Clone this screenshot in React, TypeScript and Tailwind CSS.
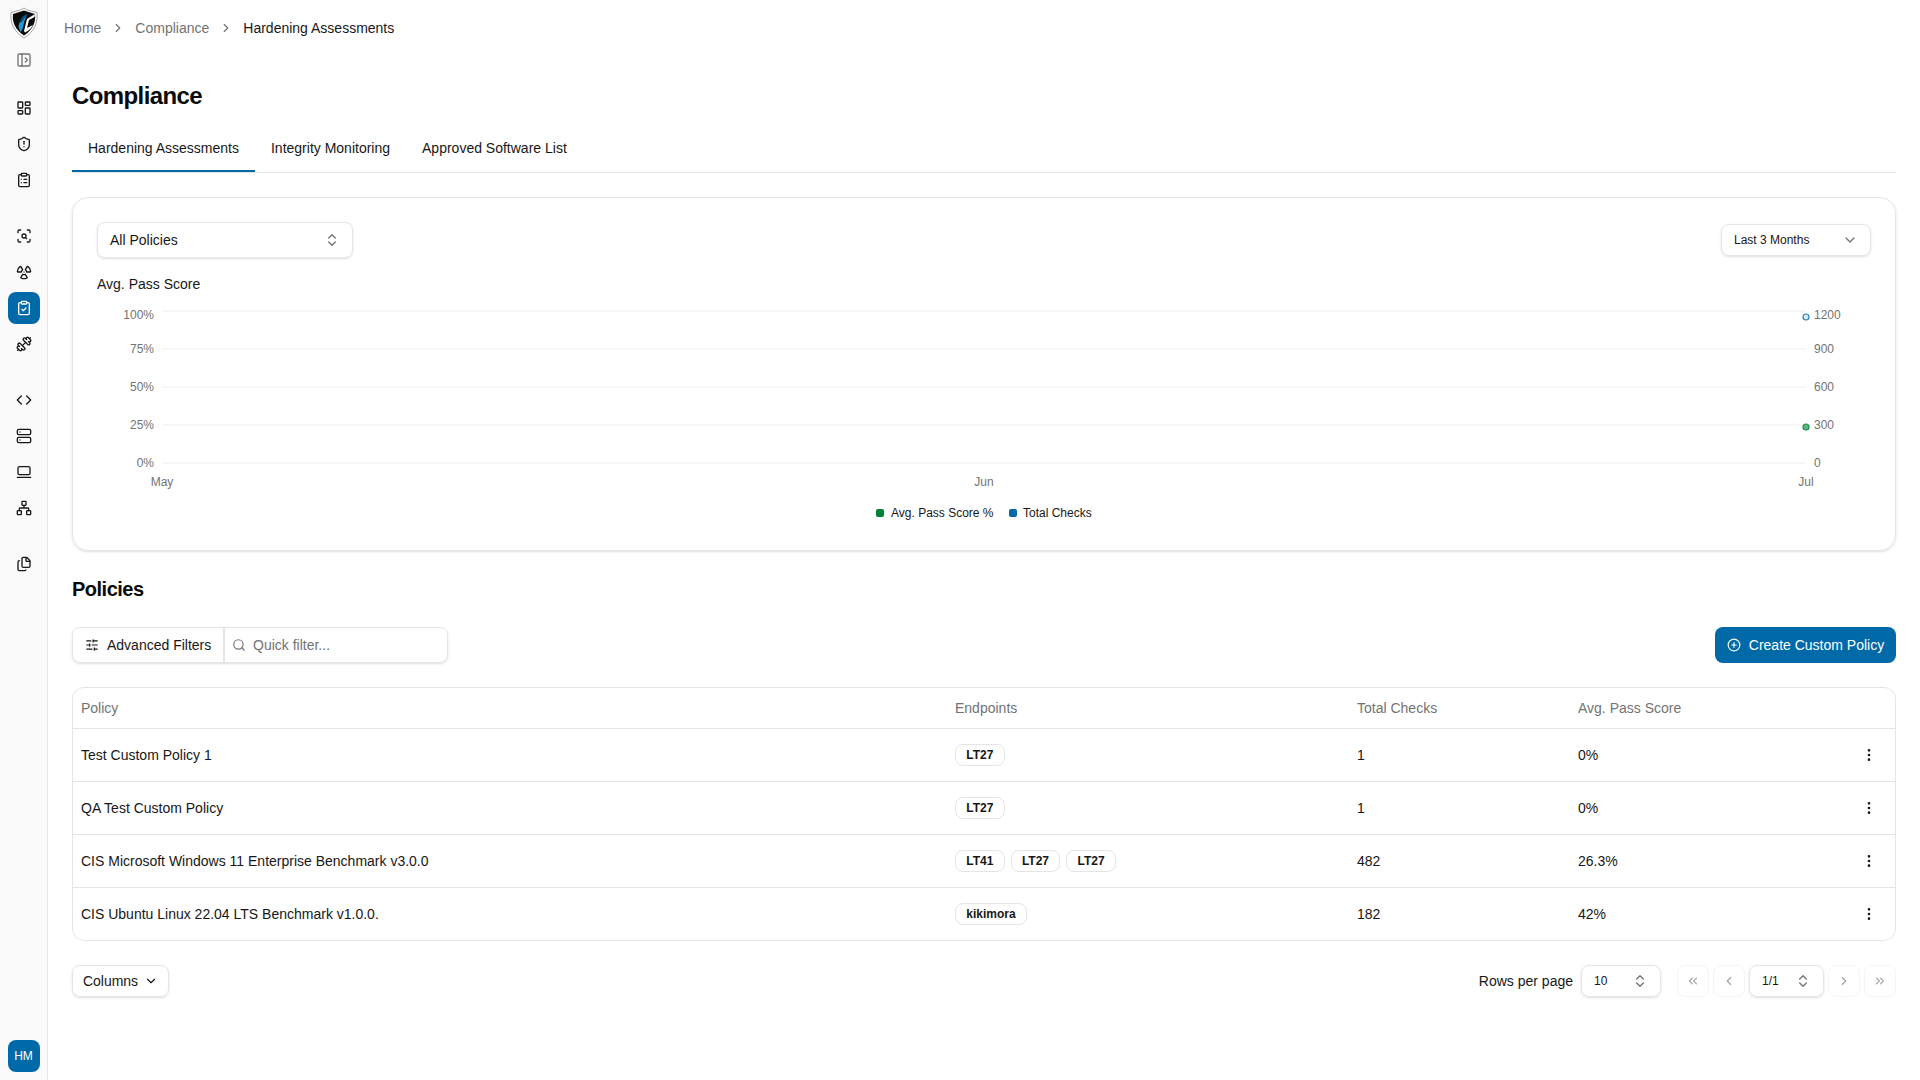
import {
  ChevronDown,
  ChevronLeft,
  ChevronRight,
  ChevronsLeft,
  ChevronsRight,
  ChevronsUpDown,
  ClipboardCheck,
  ClipboardList,
  Code,
  Dumbbell,
  EllipsisVertical,
  Files,
  LaptopMinimal,
  LayoutDashboard,
  Network,
  PanelLeftOpen,
  PlusCircle,
  Radiation,
  ScanSearch,
  Search,
  Server,
  ShieldAlert,
  SlidersHorizontal,
} from "lucide-react";

const policies = [
  { name: "Test Custom Policy 1", endpoints: ["LT27"], checks: "1", score: "0%" },
  { name: "QA Test Custom Policy", endpoints: ["LT27"], checks: "1", score: "0%" },
  { name: "CIS Microsoft Windows 11 Enterprise Benchmark v3.0.0", endpoints: ["LT41", "LT27", "LT27"], checks: "482", score: "26.3%" },
  { name: "CIS Ubuntu Linux 22.04 LTS Benchmark v1.0.0.", endpoints: ["kikimora"], checks: "182", score: "42%" },
];

const leftTicks = [
  { label: "100%", y: 15 },
  { label: "75%", y: 49 },
  { label: "50%", y: 87 },
  { label: "25%", y: 125 },
  { label: "0%", y: 163 },
];
const rightTicks = ["1200", "900", "600", "300", "0"];
const gridLines = [11, 49, 87, 125, 163];

function Logo() {
  return (
    <svg width="30" height="32" viewBox="0 0 30 32">
      <path d="M15 1 L18.5 3 L28 5.5 C29 15 26 24 15 31 C4 24 1 15 2 5.5 L11.5 3 Z" fill="#fff" stroke="#a3a3a3" strokeWidth="1" />
      <path d="M15 3.5 L26 7 C27 15 24 22.5 15 28.5 C6 22.5 3 15 4 7 Z" fill="#0a0a0a" />
      <path d="M18 7 L15.5 14 L13.5 22 L11.5 25 L9.5 20 C10 15 13 10 18 7 Z" fill="#1d9bd9" />
      <path d="M18 7 L13 10 L10.5 16 L13 15 Z" fill="#0c4a7e" />
      <path d="M18 12 L26 7 L25.5 10 L20 13 L18 21 L24 18 C22.5 21 20 23.5 16 25.5 L15 24 Z" fill="#fff" />
    </svg>
  );
}

function NavIcon({ children, active }: { children: React.ReactNode; active?: boolean }) {
  return (
    <div className={active ? "flex h-8 w-8 items-center justify-center rounded-lg bg-[#0069a8] text-white" : "flex h-8 w-8 items-center justify-center text-neutral-900"}>
      {children}
    </div>
  );
}

function Sidebar() {
  return (
    <aside className="flex h-[1080px] w-12 shrink-0 flex-col items-center border-r border-neutral-200 bg-neutral-50">
      <div className="mt-[7px] flex h-8 items-center">
        <Logo />
      </div>
      <div className="mt-[5px] flex h-8 w-8 items-center justify-center text-neutral-500">
        <PanelLeftOpen size={16} />
      </div>
      <div className="mt-[16px] flex flex-col gap-1">
        <NavIcon><LayoutDashboard size={16} /></NavIcon>
        <NavIcon><ShieldAlert size={16} /></NavIcon>
        <NavIcon><ClipboardList size={16} /></NavIcon>
      </div>
      <div className="mt-6 flex flex-col gap-1">
        <NavIcon><ScanSearch size={16} /></NavIcon>
        <NavIcon><Radiation size={16} /></NavIcon>
        <NavIcon active><ClipboardCheck size={16} /></NavIcon>
        <NavIcon><Dumbbell size={16} /></NavIcon>
      </div>
      <div className="mt-6 flex flex-col gap-1">
        <NavIcon><Code size={16} /></NavIcon>
        <NavIcon><Server size={16} /></NavIcon>
        <NavIcon><LaptopMinimal size={16} /></NavIcon>
        <NavIcon><Network size={16} /></NavIcon>
      </div>
      <div className="mt-6">
        <NavIcon><Files size={16} /></NavIcon>
      </div>
      <div className="mt-auto mb-2 flex h-8 w-8 items-center justify-center rounded-lg bg-[#0069a8] text-xs text-white">HM</div>
    </aside>
  );
}

function Chart() {
  return (
    <svg className="mt-[6px] block" width="1774" height="230" viewBox="0 0 1774 230" fontFamily="'Liberation Sans', Arial, sans-serif" fontSize="12">
      {gridLines.map((y) => (
        <line key={y} x1="65" x2="1709" y1={y} y2={y} stroke="#f7f7f7" strokeWidth="2" />
      ))}
      {leftTicks.map((t) => (
        <text key={t.label} x="57" y={t.y + 4} textAnchor="end" fill="#737373">{t.label}</text>
      ))}
      {rightTicks.map((t, i) => (
        <text key={t} x="1717" y={leftTicks[i].y + 4} fill="#737373">{t}</text>
      ))}
      <text x="65" y="186" textAnchor="middle" fill="#737373">May</text>
      <text x="887" y="186" textAnchor="middle" fill="#737373">Jun</text>
      <text x="1709" y="186" textAnchor="middle" fill="#737373">Jul</text>
      <circle cx="1709" cy="17" r="3" fill="#d6e8f3" stroke="#3484b8" strokeWidth="1.2" />
      <circle cx="1709" cy="127" r="3" fill="#5bb583" stroke="#1f8f4e" strokeWidth="1.2" />
      <rect x="779" y="209" width="8" height="8" rx="2" fill="#008236" />
      <text x="794" y="217" fill="#171717">Avg. Pass Score %</text>
      <rect x="912" y="209" width="8" height="8" rx="2" fill="#0069a8" />
      <text x="926" y="217" fill="#171717">Total Checks</text>
    </svg>
  );
}

function Chip({ label }: { label: string }) {
  return (
    <span className="inline-flex h-[22px] items-center rounded-lg border border-neutral-200 px-[10.25px] text-xs font-semibold text-neutral-900">{label}</span>
  );
}

function PolicyTable() {
  const cols = "grid grid-cols-[874px_402px_221px_1fr_48px] items-center";
  return (
    <div className="mt-6 overflow-hidden rounded-xl border border-neutral-200">
      <div className={`${cols} h-[41px] border-b border-neutral-200 text-sm text-[#737373]`}>
        <div className="px-2">Policy</div>
        <div className="px-2">Endpoints</div>
        <div className="px-2">Total Checks</div>
        <div className="px-2">Avg. Pass Score</div>
        <div />
      </div>
      {policies.map((p, i) => (
        <div key={p.name} className={`${cols} text-sm text-neutral-900 ${i < policies.length - 1 ? "h-[53px] border-b border-neutral-200" : "h-[52px]"}`}>
          <div className="px-2">{p.name}</div>
          <div className="flex gap-1.5 px-2">
            {p.endpoints.map((e, j) => (
              <Chip key={j} label={e} />
            ))}
          </div>
          <div className="px-2">{p.checks}</div>
          <div className="px-2">{p.score}</div>
          <div className="flex justify-center pr-1">
            <EllipsisVertical size={16} />
          </div>
        </div>
      ))}
    </div>
  );
}

function PageBtn({ children }: { children: React.ReactNode }) {
  return (
    <div className="flex h-8 w-8 items-center justify-center rounded-lg border border-neutral-100 text-[#a3a3a3]">{children}</div>
  );
}

function Pagination() {
  return (
    <div className="mt-6 flex items-center justify-between">
      <div className="flex h-8 w-[97px] items-center justify-center gap-1.5 rounded-lg border border-neutral-200 text-sm text-neutral-900 shadow-sm">
        Columns <ChevronDown size={14} />
      </div>
      <div className="flex items-center">
        <span className="text-sm text-neutral-900">Rows per page</span>
        <div className="ml-2 flex h-8 w-20 items-center justify-between rounded-lg border border-neutral-200 px-3 text-xs text-neutral-900 shadow-sm">
          10 <ChevronsUpDown size={16} className="text-[#737373]" />
        </div>
        <div className="ml-4 flex items-center gap-1">
          <PageBtn><ChevronsLeft size={14} /></PageBtn>
          <PageBtn><ChevronLeft size={14} /></PageBtn>
          <div className="flex h-8 w-[75px] items-center justify-between rounded-lg border border-neutral-200 px-3 text-xs text-neutral-900 shadow-sm">
            1/1 <ChevronsUpDown size={16} className="text-[#737373]" />
          </div>
          <PageBtn><ChevronRight size={14} /></PageBtn>
          <PageBtn><ChevronsRight size={14} /></PageBtn>
        </div>
      </div>
    </div>
  );
}

export default function App() {
  return (
    <div className="flex min-h-[1080px] bg-white font-['Liberation_Sans',Arial,sans-serif] text-neutral-900">
      <Sidebar />
      <main className="min-w-0 flex-1 pr-6">
        <nav className="flex h-14 items-center gap-2.5 pl-4 text-sm text-[#737373]">
          <span>Home</span>
          <ChevronRight size={14} />
          <span>Compliance</span>
          <ChevronRight size={14} />
          <span className="text-neutral-900">Hardening Assessments</span>
        </nav>
        <div className="pl-6">
          <h1 className="mt-6 text-2xl font-bold tracking-tight text-neutral-950">Compliance</h1>
          <div className="mt-3 flex border-b border-neutral-200 text-sm">
            <div className="flex h-12 items-center border-b-2 border-[#0069a8] px-4 pt-0.5">Hardening Assessments</div>
            <div className="flex h-12 items-center px-4">Integrity Monitoring</div>
            <div className="flex h-12 items-center px-4">Approved Software List</div>
          </div>

          <section className="mt-6 h-[354px] rounded-2xl border border-neutral-200 px-6 pt-6 shadow-sm">
            <div className="flex items-center justify-between">
              <div className="flex h-9 w-64 items-center justify-between rounded-lg border border-neutral-200 px-3 text-sm shadow-sm">
                All Policies <ChevronsUpDown size={16} className="text-[#737373]" />
              </div>
              <div className="flex h-8 w-[150px] items-center justify-between rounded-lg border border-neutral-200 px-3 text-xs shadow-sm">
                Last 3 Months <ChevronDown size={16} className="text-[#737373]" />
              </div>
            </div>
            <div className="mt-4 text-sm">Avg. Pass Score</div>
            <Chart />
          </section>

          <h2 className="mt-6 text-xl font-bold tracking-tight text-neutral-950">Policies</h2>
          <div className="mt-6 flex items-center justify-between">
            <div className="flex h-9 w-[376px] items-center rounded-lg border border-neutral-200 text-sm shadow-sm">
              <div className="flex h-full w-[152px] items-center gap-2 border-r-2 border-neutral-200 pl-3">
                <SlidersHorizontal size={14} /> Advanced Filters
              </div>
              <div className="flex items-center gap-[7px] pl-[7px] text-[#737373]">
                <Search size={14} /> Quick filter...
              </div>
            </div>
            <div className="flex h-9 w-[181px] items-center justify-center gap-2 rounded-lg bg-[#0069a8] text-sm text-white">
              <PlusCircle size={14} /> Create Custom Policy
            </div>
          </div>

          <PolicyTable />
          <Pagination />
        </div>
      </main>
    </div>
  );
}
